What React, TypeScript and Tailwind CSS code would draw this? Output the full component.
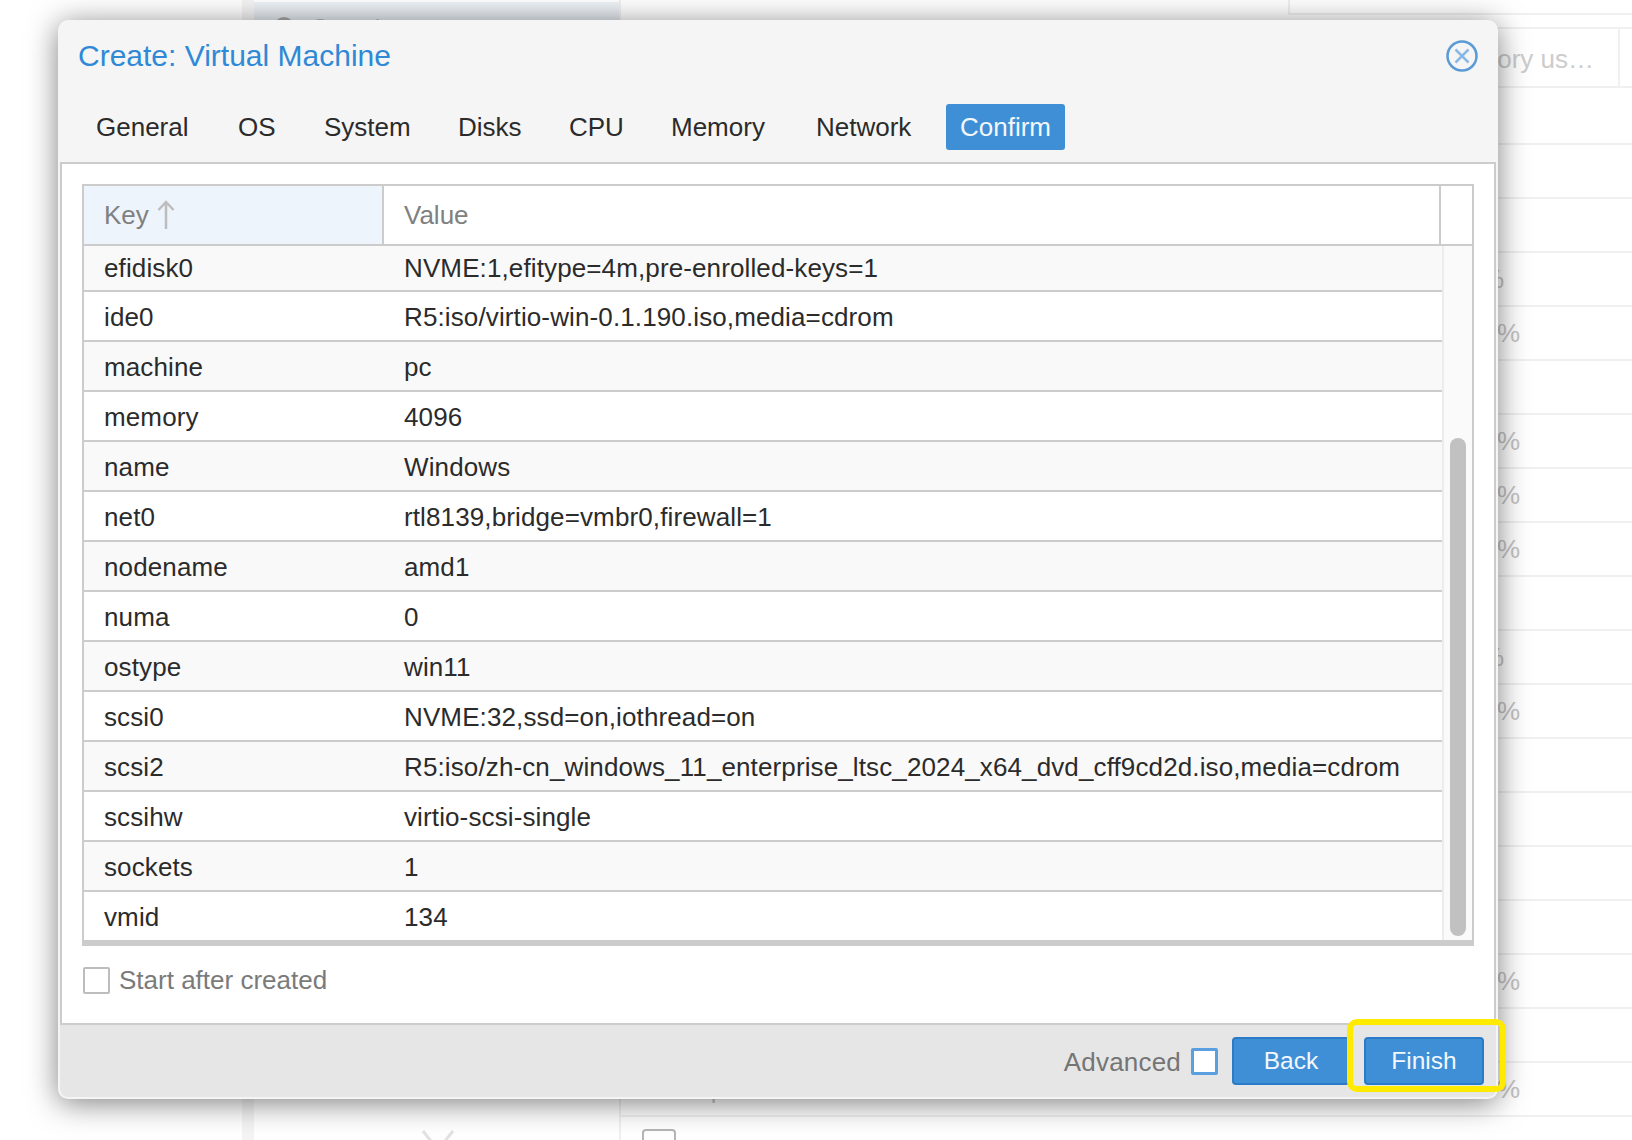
const rows = [
  ['efidisk0', 'NVME:1,efitype=4m,pre-enrolled-keys=1'],
  ['ide0', 'R5:iso/virtio-win-0.1.190.iso,media=cdrom'],
  ['machine', 'pc'],
  ['memory', '4096'],
  ['name', 'Windows'],
  ['net0', 'rtl8139,bridge=vmbr0,firewall=1'],
  ['nodename', 'amd1'],
  ['numa', '0'],
  ['ostype', 'win11'],
  ['scsi0', 'NVME:32,ssd=on,iothread=on'],
  ['scsi2', 'R5:iso/zh-cn_windows_11_enterprise_ltsc_2024_x64_dvd_cff9cd2d.iso,media=cdrom'],
  ['scsihw', 'virtio-scsi-single'],
  ['sockets', '1'],
  ['vmid', '134'],
];

const tabs = [
  { label: 'General', cls: 'w-[142px]' },
  { label: 'OS', cls: 'w-[86px]' },
  { label: 'System', cls: 'w-[134px]' },
  { label: 'Disks', cls: 'w-[111px]' },
  { label: 'CPU', cls: 'w-[102px]' },
  { label: 'Memory', cls: 'w-[145px]' },
  { label: 'Network', cls: 'w-[130px]' },
];

// faint rows of the page behind the dialog
const pageRows = Array.from({ length: 20 }, (_, i) => i);
const fullPercent = [4, 6, 7, 8, 11, 16];
const clippedPercent = [3, 10];

const App = () => {
  return (
    <div className="relative flex h-[1140px] w-[1632px] overflow-hidden bg-white font-['Liberation_Sans',Arial,sans-serif]">
      {/* page behind */}
      <div className="w-[242px] shrink-0" />
      <div className="w-[12px] shrink-0 bg-[#f4f4f4]" />
      <div className="flex w-[365px] shrink-0 flex-col">
        <div className="mt-[2px] flex h-[40px] items-start gap-[18px] bg-gradient-to-b from-[#eef3f8] to-[#d5dbe3] pl-[20px] pt-[14px] text-[24px] text-[#b5b5b5]">
          <div className="mt-[1px] h-[20px] w-[20px] rounded-full border-[4px] border-[#a8a8a8]" />
          <div className="leading-none">Search</div>
        </div>
        <div className="mt-auto h-[10px] overflow-hidden pl-[168px]">
          <svg width="32" height="24" viewBox="0 0 32 24" fill="none">
            <path d="M1 1L16 20L31 1" stroke="#e2e2e2" strokeWidth="3" />
          </svg>
        </div>
      </div>
      <div className="flex flex-1 flex-col border-l-2 border-[#f0f0f0]">
        <div className="flex h-[15px] shrink-0">
          <div className="w-[667px]" />
          <div className="flex-1 border-b-2 border-l-2 border-[#f0f0f0]" />
        </div>
        <div className="h-[14px] shrink-0 border-b-2 border-[#f0f0f0]" />
        <div className="flex h-[59px] shrink-0 border-b-2 border-[#f0f0f0]">
          <div className="w-[666px]" />
          <div className="flex w-[333px] items-center justify-end border-r-2 border-[#f0f0f0] pr-[24px] pt-[4px] text-[26px] text-[#cccccc]">
            Memory us…
          </div>
        </div>
        {pageRows.map((i) => (
          <div
            key={i}
            className={`flex shrink-0 items-center border-b-2 border-[#f0f0f0] text-[26px] text-[#c4c4c4] ${i === 0 ? 'h-[57px]' : 'h-[54px]'}`}
          >
            {i === 18 && (
              <>
                <div className="flex w-[200px] items-center gap-[24px] whitespace-nowrap pl-[33px] text-[#c8c8c8]">
                  <svg width="24" height="14" viewBox="0 0 24 14" className="mt-[4px] shrink-0">
                    <path d="M2 14L5 4H12V14Z" fill="#b5b5b5" />
                    <path d="M12 0L24 6L12 14Z" fill="#c6e5c8" />
                  </svg>
                  qemu
                </div>
                <div className="w-[699px] text-right">%</div>
              </>
            )}
            {i === 19 && (
              <div className="ml-[21px] h-[28px] w-[34px] rounded-[4px] border-2 border-[#b5b5b5]" />
            )}
            {fullPercent.includes(i) && <div className="w-[899px] text-right">%</div>}
            {clippedPercent.includes(i) && <div className="w-[883px] text-right">%</div>}
          </div>
        ))}
      </div>

      {/* dialog */}
      <div className="absolute left-[58px] top-[20px] flex h-[1079px] w-[1440px] flex-col rounded-[10px] bg-[#f5f5f5] shadow-[0_4px_30px_rgba(0,0,0,0.5)]">
        <div className="flex h-[142px] shrink-0 flex-col px-[20px]">
          <div className="flex h-[72px] items-center justify-between">
            <div className="pb-[2px] text-[30px] text-[#2f89d6]">Create: Virtual Machine</div>
            <svg width="32" height="32" viewBox="0 0 32 32" fill="none">
              <circle cx="16" cy="16" r="14.5" stroke="#5a9bd5" strokeWidth="2.5" />
              <path d="M9.5 9.5L22.5 22.5M22.5 9.5L9.5 22.5" stroke="#8ab8e6" strokeWidth="2.5" />
            </svg>
          </div>
          <div className="flex items-center pl-[18px] pt-[12px] text-[26px] text-[#2b2b2b]">
            {tabs.map((t) => (
              <div key={t.label} className={t.cls}>
                {t.label}
              </div>
            ))}
            <div className="flex h-[46px] w-[119px] items-center justify-center rounded-[3px] bg-[#3f8fd6] text-[#f2f7fc]">
              Confirm
            </div>
          </div>
        </div>

        <div className="mx-[2px] flex h-[863px] shrink-0 flex-col border-2 border-[#cccccc] bg-white px-[20px] pt-[20px]">
          <div className="flex h-[762px] shrink-0 flex-col border-2 border-b-[6px] border-[#cccccc]">
            <div className="flex h-[60px] shrink-0 border-b-2 border-[#cccccc] text-[26px] text-[#808080]">
              <div className="flex w-[300px] items-center gap-[7px] border-r-2 border-[#cccccc] bg-[#edf4fb] pl-[20px]">
                Key
                <svg width="20" height="30" viewBox="0 0 20 30" fill="none">
                  <path d="M10 29V2M2.5 10L10 2L17.5 10" stroke="#bdbdbd" strokeWidth="2.5" />
                </svg>
              </div>
              <div className="flex w-[1057px] items-center border-r-2 border-[#cccccc] pl-[20px]">Value</div>
            </div>
            <div className="flex min-h-0 flex-1">
              <div className="flex w-[1358px] shrink-0 flex-col">
                {rows.map((r, i) => (
                  <div
                    key={r[0]}
                    className={`flex shrink-0 items-center text-[26px] tracking-[0.12px] text-[#2b2b2b] ${i === 0 ? 'h-[46px]' : i === rows.length - 1 ? 'h-[48px] pt-[2px]' : 'h-[50px] pt-[2px]'} ${i % 2 === 0 ? 'bg-[#f9f9f9]' : 'bg-white'} ${i < rows.length - 1 ? 'border-b-2 border-[#cccccc]' : ''}`}
                  >
                    <div className="w-[300px] shrink-0 pl-[20px]">{r[0]}</div>
                    <div className="pl-[20px]">{r[1]}</div>
                  </div>
                ))}
              </div>
              <div className="flex flex-1 justify-center border-l-2 border-[#ececec] bg-[#fafafa] pt-[192px]">
                <div className="h-[498px] w-[16px] rounded-full bg-[#c1c1c1]" />
              </div>
            </div>
          </div>
          <div className="flex flex-1 items-center gap-[9px] pb-[9px] text-[26px] text-[#7a7a7a]">
            <div className="ml-[1px] h-[27px] w-[27px] rounded-[2px] border-2 border-[#bdbdbd] bg-white" />
            Start after created
          </div>
        </div>

        <div className="mx-[2px] mb-[2px] flex min-h-0 flex-1 items-center justify-end rounded-b-[8px] bg-[#e6e6e6] pb-[1px] pr-[12px] text-[26px]">
          <div className="mr-[10px] pt-[4px] tracking-[0.2px] text-[#757575]">Advanced</div>
          <div className="mr-[14px] mt-[1px] h-[27px] w-[27px] rounded-[2px] border-[3px] border-[#5a9fe0] bg-white" />
          <div className="mr-[14px] flex h-[48px] w-[118px] items-center justify-center rounded-[4px] border-2 border-[#2a7cc9] bg-[#3f8fd6] pt-[1px] text-[24.5px] text-[#f2f7fc]">
            Back
          </div>
          <div className="relative flex h-[48px] w-[120px] items-center justify-center rounded-[4px] border-2 border-[#2a7cc9] bg-[#3f8fd6] pt-[1px] text-[24.5px] text-[#f2f7fc]">
            Finish
            <div className="absolute bottom-[-9px] left-[-19px] right-[-24px] top-[-20px] rounded-[10px] border-[6px] border-[#ffea00]" />
          </div>
        </div>
      </div>
    </div>
  );
};

export default App;
